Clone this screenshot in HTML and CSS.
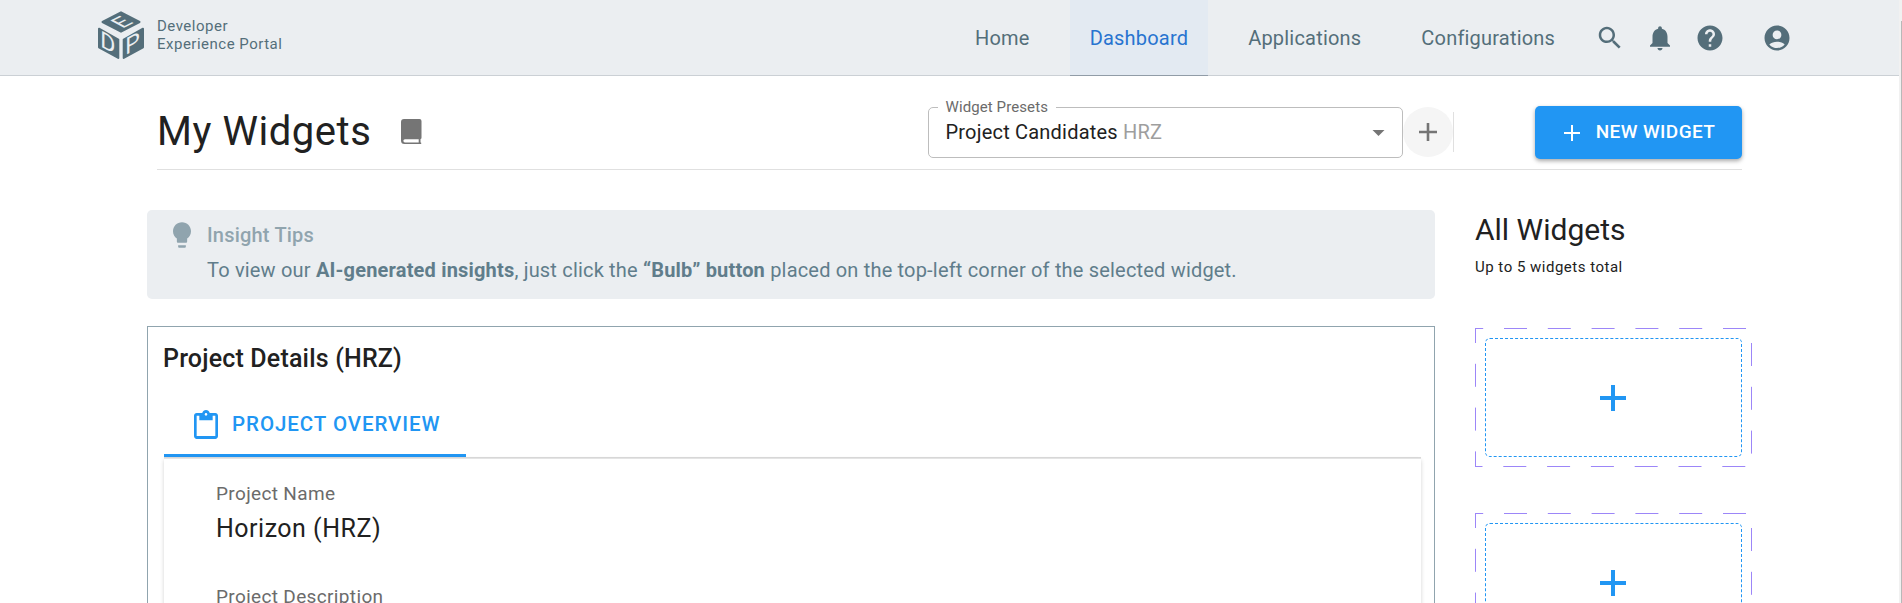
FILE: index.html
```html
<!DOCTYPE html>
<html lang="en">
<head>
<meta charset="utf-8">
<title>Developer Experience Portal</title>
<link rel="stylesheet" href="styles.css">
</head>
<body>
<div class="page">
<header class="topbar">
  <div class="brand">
    <svg class="brand-cube" width="46" height="48" viewBox="0 0 46 48">
      <g class="cube-face">
        <path d="M23 1.3 41.5 11 23 20.700 4.500 11z"/>
        <path d="M1 17.700 20.300 28.500V47L1 36.300z"/>
        <path d="M45 17.700 25.700 28.500V47L45 36.300z"/>
      </g>
      <g class="cube-letter">
        <text transform="matrix(1 .556 0 1 2.200 35.200)" font-size="23">D</text>
        <text transform="matrix(1 -.556 0 1 27.200 44.200)" font-size="23">P</text>
        <text transform="matrix(1.100 -.56 1 .54 24.300 17.800)" font-size="19">E</text>
      </g>
    </svg>
    <div class="brand-name">Developer<br>Experience Portal</div>
  </div>
  <nav class="nav">
    <a class="nav-link">Home</a>
    <a class="nav-link active">Dashboard</a>
    <a class="nav-link">Applications</a>
    <a class="nav-link">Configurations</a>
  </nav>
  <div class="tools">
    <svg class="icon" viewBox="0 0 24 24"><path d="M15.500 14h-.79l-.28-.27C15.410 12.590 16 11.110 16 9.500 16 5.910 13.090 3 9.500 3S3 5.910 3 9.500 5.910 16 9.500 16c1.610 0 3.090-.59 4.230-1.570l.27.28v.79l5 4.990L20.490 19l-4.990-5zm-6 0C7.010 14 5 11.990 5 9.500S7.010 5 9.500 5 14 7.010 14 9.500 11.990 14 9.500 14z"/></svg>
    <svg class="icon" viewBox="0 0 24 24"><path d="M12 22c1.100 0 2-.9 2-2h-4c0 1.100.89 2 2 2zm6-6v-5c0-3.070-1.640-5.640-4.500-6.320V4c0-.83-.67-1.500-1.500-1.500s-1.500.67-1.500 1.500v.68C7.630 5.360 6 7.920 6 11v5l-2 2v1h16v-1l-2-2z"/></svg>
    <svg class="icon" viewBox="0 0 24 24"><path d="M12 2C6.480 2 2 6.480 2 12s4.480 10 10 10 10-4.480 10-10S17.520 2 12 2zm1 17h-2v-2h2v2zm2.070-7.750l-.9.920C13.450 12.900 13 13.500 13 15h-2v-.5c0-1.100.45-2.100 1.170-2.830l1.240-1.260c.37-.36.590-.86.590-1.410 0-1.100-.9-2-2-2s-2 .9-2 2H8c0-2.210 1.790-4 4-4s4 1.790 4 4c0 .88-.36 1.680-.93 2.250z"/></svg>
    <svg class="icon account" viewBox="0 0 24 24"><path d="M12 2C6.480 2 2 6.480 2 12s4.480 10 10 10 10-4.480 10-10S17.520 2 12 2zm0 4c1.930 0 3.500 1.570 3.500 3.500S13.930 13 12 13s-3.500-1.570-3.500-3.500S10.070 6 12 6zm0 14c-2.030 0-4.430-.82-6.140-2.880C7.550 15.800 9.680 15 12 15s4.450.8 6.140 2.120C16.430 19.180 14.030 20 12 20z"/></svg>
  </div>
</header>

<section class="heading">
  <h1>My Widgets</h1>
  <svg class="book" viewBox="0 0 20.500 25"><path fill-rule="evenodd" d="M3 0H18.500a2 2 0 0 1 2 2V18.700a1.500 1.500 0 0 1-1 1.400V23.500h.3a.8.8 0 0 1 0 1.500H3.500A3.500 3.500 0 0 1 0 21.500V3A3 3 0 0 1 3 0zM4 20.200a1.600 1.600 0 0 0 0 3.300H17.700V20.200z"/></svg>
  <fieldset class="select">
    <legend>Widget Presets</legend>
    <span class="value">Project Candidates <span class="code">HRZ</span></span>
    <svg class="caret" viewBox="0 0 12 6"><path d="M0 0h12L6 6z"/></svg>
  </fieldset>
  <button class="round"><svg viewBox="0 0 18 18"><path d="M7.700 0h2.600v7.700H18v2.600h-7.700V18H7.700v-7.700H0V7.700h7.700z"/></svg></button>
  <span class="divider"></span>
  <button class="new"><svg viewBox="0 0 16 16"><path d="M7 0h2v7h7v2H9v7H7V9H0V7h7z"/></svg><span>NEW WIDGET</span></button>
</section>

<main class="content">
  <div class="main-col">
    <section class="tips">
      <svg class="bulb" viewBox="5 2 14 20"><path d="M9 21c0 .5.400 1 1 1h4c.6 0 1-.5 1-1v-1H9v1zm3-19C8.100 2 5 5.100 5 9c0 2.400 1.200 4.500 3 5.700V17c0 .5.400 1 1 1h6c.6 0 1-.5 1-1v-2.300c1.800-1.300 3-3.400 3-5.700 0-3.900-3.100-7-7-7z"/></svg>
      <div>
        <h2>Insight Tips</h2>
        <p>To view our <b>AI-generated insights</b>, just click the <b>“Bulb” button</b> placed on the top-left corner of the selected widget.</p>
      </div>
    </section>
    <section class="project">
      <h2>Project Details (HRZ)</h2>
      <div class="tabs">
        <div class="tab">
          <svg viewBox="3 1 18 20" preserveAspectRatio="none"><path d="M19 3h-4.180C14.400 1.840 13.300 1 12 1c-1.300 0-2.400.84-2.820 2H5c-1.100 0-2 .9-2 2v14c0 1.100.9 2 2 2h14c1.100 0 2-.9 2-2V5c0-1.100-.9-2-2-2zm-7 0c.55 0 1 .45 1 1s-.45 1-1 1-1-.45-1-1 .45-1 1-1zm7 16H5V5h2v3h10V5h2v14z"/></svg>
          <span>PROJECT OVERVIEW</span>
        </div>
      </div>
      <div class="panel">
        <div class="label">Project Name</div>
        <div class="data">Horizon (HRZ)</div>
        <div class="label">Project Description</div>
      </div>
    </section>
  </div>
  <aside class="side">
    <h2>All Widgets</h2>
    <p>Up to 5 widgets total</p>
    <div class="slot">
      <svg class="dashes" viewBox="0 0 277 139"><path class="top" d="M0 .5H271"/><path class="right" d="M276.500 15V126"/><path class="bottom" d="M0 138.500H271"/><path class="left" d="M.5 0V139"/></svg>
      <button><svg viewBox="0 0 26 26"><path d="M11 0h4v11h11v4H15v11h-4V15H0v-4h11z"/></svg></button>
    </div>
    <div class="slot">
      <svg class="dashes" viewBox="0 0 277 139"><path class="top" d="M0 .5H271"/><path class="right" d="M276.500 15V126"/><path class="bottom" d="M0 138.500H271"/><path class="left" d="M.5 0V139"/></svg>
      <button><svg viewBox="0 0 26 26"><path d="M11 0h4v11h11v4H15v11h-4V15H0v-4h11z"/></svg></button>
    </div>
  </aside>
</main>
</div>
<div class="scrollbar"><div class="thumb"></div></div>
</body>
</html>
```
FILE: styles.css
```css
* { box-sizing: border-box; }
html { overflow: hidden; }
body {
  margin: 0;
  height: 603px;
  display: flex;
  overflow: hidden;
  background: #fff;
  color: #212121;
  font-family: Roboto, sans-serif;
}
h1, h2, p { margin: 0; font-weight: 400; }
svg { display: block; fill: currentColor; flex: none; }
button { border: 0; padding: 0; font-family: inherit; display: flex; align-items: center; justify-content: center; }

.page { flex: 1; min-width: 0; height: 603px; overflow: hidden; }
.scrollbar { width: 3px; background: #f1f1f1; padding-top: 21px; display: flex; justify-content: flex-end; }
.thumb { width: 1px; background: #b8b8b8; }

/* Top bar */
.topbar {
  height: 76px;
  display: flex;
  background: #ebeef1;
  border-bottom: 1px solid #cbd0d5;
  color: #546e7a;
}
.brand { width: 955px; flex: none; padding: 11px 0 0 98px; display: flex; gap: 13px; }
.cube-face { fill: #546e7a; stroke: #546e7a; stroke-width: 2; stroke-linejoin: round; }
.cube-letter { fill: #ebeef1; font-weight: 400; }
.brand-name { padding-top: 6px; font-size: 15px; line-height: 18px; letter-spacing: .5px; }
.nav { display: flex; gap: 20px; margin-bottom: -1px; }
.nav-link { height: 76px; padding: 0 20px; line-height: 76px; font-size: 20px; letter-spacing: .2px; }
.nav-link.active { background: #e3eaf2; color: #2874d0; border-bottom: 1px solid #919ca7; }
.tools { display: flex; align-items: center; margin-left: 20px; gap: 20px; }
.icon { width: 30px; height: 30px; }
.account { margin-left: 17px; }

/* Heading row */
.heading {
  height: 94px;
  margin-left: 157px;
  width: 1585px;
  display: flex;
  align-items: flex-start;
  border-bottom: 1px solid #e0e0e0;
}
h1 { width: 244px; padding-top: 31px; font-size: 40px; line-height: 50px; letter-spacing: .55px; white-space: nowrap; }
.book { width: 20.500px; height: 25px; margin-top: 43px; color: #757575; }
.select {
  width: 475px;
  height: 59px;
  margin: 23px 0 0 506px;
  padding: 0 17px;
  border: 1px solid #bdbdbd;
  border-radius: 5px;
  display: flex;
  align-items: flex-start;
  justify-content: space-between;
}
.select legend { margin-left: -8px; padding: 0 8px; font-size: 15px; line-height: 16px; letter-spacing: .1px; color: #6b6b6b; }
.value { font-size: 20px; line-height: 24px; padding-top: 5px; letter-spacing: .2px; }
.code { color: #9e9e9e; }
.caret { width: 13px; height: 6px; color: #757575; margin-top: 15px; }
.round { width: 50px; height: 50px; margin-top: 31px; border-radius: 50%; background: #f5f5f5; color: #757575; }
.round svg { width: 18px; }
.divider { width: 1px; height: 40px; margin-top: 36px; background: #e0e0e0; }
.new {
  width: 207px;
  height: 53px;
  margin: 30px 0 0 auto;
  padding-left: 2px;
  gap: 16px;
  border-radius: 5px;
  background: #2196f3;
  color: #fff;
  font-size: 19px;
  font-weight: 500;
  letter-spacing: .4px;
  box-shadow: 0 2px 4px rgba(0, 0, 0, .35);
}
.new svg { width: 16px; }
.new span { padding-bottom: 2px; }

/* Content */
.content { display: flex; gap: 40px; padding: 40px 0 0 147px; }
.main-col { width: 1288px; }
.tips { height: 89px; display: flex; padding: 12px 0 0 26px; gap: 16px; border-radius: 5px; background: #ebeef1; }
.bulb { width: 18px; height: 26px; color: #90a4ae; }
.tips h2 { font-size: 20px; line-height: 26px; font-weight: 500; color: #90a4ae; letter-spacing: .2px; }
.tips p { margin-top: 9px; font-size: 20px; line-height: 26px; color: #607d8b; letter-spacing: .185px; }
.tips b { font-weight: 700; }

.project { height: 320px; margin-top: 27px; padding: 16px 13px 0 16px; border: 1px solid #90a4ae; }
.project h2 { margin-left: -1px; font-size: 25px; line-height: 32px; font-weight: 500; letter-spacing: .18px; }
.tabs { margin-top: 17px; border-bottom: 1px solid #dcdcdc; height: 66px; }
.tab {
  width: 302px;
  height: 65px;
  padding: 3px 0 0 30px;
  display: flex;
  align-items: center;
  gap: 14px;
  border-bottom: 3px solid #2196f3;
  color: #2196f3;
  font-size: 20.5px;
  font-weight: 500;
  letter-spacing: .95px;
  white-space: nowrap;
}
.tab svg { width: 24px; height: 29px; }
.tab span { padding-bottom: 2px; }
.panel { height: 240px; padding: 22px 52px; border-top: 1px solid #e4e4e4; box-shadow: 0 2px 4px rgba(0, 0, 0, .18); }
.label { font-size: 19px; line-height: 26px; color: #6b6b6b; letter-spacing: .35px; }
.data { font-size: 25px; line-height: 36px; margin: 4px 0 37px; letter-spacing: .5px; }

.side { width: 277px; }
.side h2 { font-size: 30px; line-height: 38px; padding-top: 1px; }
.side p { margin-top: 8px; font-size: 15px; line-height: 20px; letter-spacing: .5px; }
.slot { position: relative; width: 277px; height: 139px; padding: 10px; margin-top: 46px; }
.side p + .slot { margin-top: 51px; }
.slot button { width: 257px; height: 119px; padding-right: 1px; border: 1px dashed #2196f3; border-radius: 5px; background: #fff; color: #2196f3; }
.slot button svg { width: 26px; }
.dashes { position: absolute; left: 0; top: 0; width: 277px; height: 139px; fill: none; stroke: #9c86f8; stroke-dasharray: 23 20.8; }
.dashes .top { stroke-dashoffset: 14.8px; }
.dashes .bottom { stroke-dashoffset: 15.5px; }
.dashes .left { stroke-dashoffset: 8px; }
```
